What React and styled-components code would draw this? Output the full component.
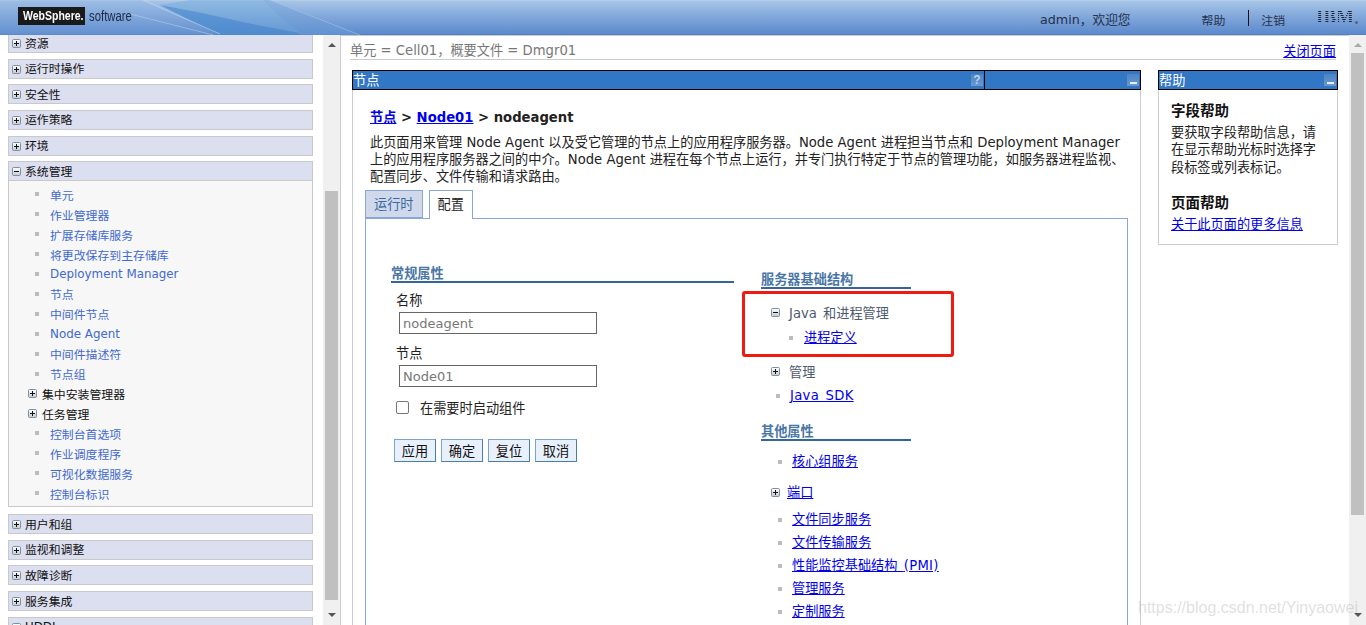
import React from "react";
import styled, { createGlobalStyle } from "styled-components";

const GlobalStyle = createGlobalStyle`
  html, body {
    margin: 0;
    height: 100%;
    overflow: hidden;
    background: #fff;
    font-family: "DejaVu Sans", "Noto Sans CJK SC", sans-serif;
    font-size: 13.2px;
    color: #222;
  }
`;

const Page = styled.div`
  position: relative;
  height: 625px;
  display: flex;
  flex-direction: column;
  overflow: hidden;
`;

const TopBar = styled.header`
  position: relative;
  flex: none;
  height: 35px;
  box-sizing: border-box;
  display: flex;
  align-items: flex-start;
  padding-left: 18px;
  background: linear-gradient(#a6c4e6, #86abdc 40%, #5d8bcd 95%, #4d7ec8);
  border-top: 1px solid #b4cce8;
`;

const Swoosh = styled.svg`
  position: absolute;
  left: 0;
  top: -1px;
`;

const Logo = styled.div`
  position: relative;
  flex: none;
  width: 67px;
  height: 18px;
  margin-top: 6px;
  background: #1a1a1a;
  color: #fff;
  font: bold 12.5px/18px "Liberation Sans", sans-serif;
  overflow: hidden;
`;

const LogoText = styled.span`
  display: inline-block;
  margin-left: 5px;
  transform: scaleX(0.84);
  transform-origin: left center;
  white-space: nowrap;
`;

const LogoSub = styled.div`
  position: relative;
  flex: none;
  width: 44px;
  margin: 7px 0 0 4px;
  color: #1f2a44;
  font: 14px/16px "Liberation Sans", sans-serif;
  transform: scaleX(0.81);
  transform-origin: left center;
`;

const UserArea = styled.div`
  position: relative;
  margin-left: 907px;
  display: flex;
  align-items: center;
  height: 34px;
  color: #26314c;
  font-size: 12.7px;
`;

const HeaderLink = styled.span`
  font-size: 11.88px;
  margin-top: 2px;
  margin-left: ${(p) => p.$left}px;
`;

const HeaderDivider = styled.span`
  width: 1px;
  height: 16px;
  background: #111;
  margin: 0 12px 0 23px;
`;

const IbmMark = styled.div`
  font: bold 19px/16px "Liberation Serif", serif;
  margin: -3px 0 0 31px;
  background: repeating-linear-gradient(#1e2433 0 1px, transparent 1px 2px);
  -webkit-background-clip: text;
  background-clip: text;
  color: transparent;
`;

const IbmDot = styled.span`
  width: 3px;
  height: 3px;
  margin: 9px 0 0 1px;
  border-radius: 50%;
  background: #5a6475;
`;

const Content = styled.div`
  flex: 1;
  min-height: 0;
  display: flex;
`;

const Nav = styled.nav`
  flex: none;
  width: 341px;
  display: flex;
  border-right: 1px solid #ccc;
  box-sizing: border-box;
`;

const NavList = styled.div`
  flex: 1;
  min-width: 0;
  padding: 0 10px 0 8px;
  margin-top: -2px;
`;

const Track = styled.div`
  flex: none;
  width: 17px;
  display: flex;
  flex-direction: column;
  align-items: center;
  background: #f0f0f0;
  height: 590px;
`;

const Arrow = styled.div`
  flex: none;
  width: 0;
  height: 0;
  border-left: 4px solid transparent;
  border-right: 4px solid transparent;
  ${(p) =>
    p.$down
      ? `border-top: 4px solid #555; margin-top: auto; margin-bottom: 8px;`
      : `border-bottom: 4px solid ${p.$dim ? "#aaa" : "#555"}; margin-top: 8px;`}
`;

const Thumb = styled.div`
  flex: none;
  width: 13px;
  background: #c0c0c0;
`;

const NavBar = styled.div`
  height: 20px;
  box-sizing: border-box;
  display: flex;
  align-items: center;
  padding: 1px 0 0 3px;
  gap: 4px;
  background: #dcdff0;
  border: 1px solid #c9c9c9;
  font-size: 11.88px;
  line-height: 18px;
  color: #111;
  margin-bottom: ${(p) => (p.$open ? 0 : 5.67)}px;
`;

const NavPanel = styled.div`
  background: #f7f7f7;
  border: 1px solid #c9c9c9;
  border-top: none;
  padding: 3px 0 3px;
  margin-bottom: 7px;
`;

const NavItem = styled.div`
  height: 19.93px;
  display: flex;
  align-items: center;
  padding-left: 26px;
  font-size: 11.88px;
  color: #4169cf;
`;

const NavBullet = styled.span`
  width: 4px;
  height: 4px;
  background: #bcbcbc;
  margin-right: 11px;
`;

const NavGroupRow = styled.div`
  height: 19.93px;
  display: flex;
  align-items: center;
  gap: 5px;
  padding-left: 19px;
  font-size: 11.88px;
  color: #111;
`;

const Main = styled.main`
  flex: 1;
  min-width: 0;
  border-top: 1px solid #ccc;
  box-sizing: border-box;
`;

const ContextBar = styled.div`
  height: 24px;
  box-sizing: border-box;
  margin: 0 13px 0 9px;
  padding-top: 6px;
  display: flex;
  justify-content: space-between;
  align-items: center;
  border-bottom: 1px solid #ccc;
  color: #777;
  line-height: 17px;
`;

const Link = styled.a`
  color: #0000ee;
  text-decoration: underline;
  font-size: 13.2px;
  line-height: 17px;
  white-space: nowrap;
`;

const CloseLink = styled(Link)`
  margin-top: 2px;
`;

const Latin = styled.span`
  letter-spacing: 0.3px;
`;

const PanelRow = styled.div`
  display: flex;
  align-items: flex-start;
  gap: 17px;
  margin: 10px 0 0 11px;
`;

const Panel = styled.section`
  flex: none;
  width: ${(p) => p.$width}px;
`;

const PanelHead = styled.div`
  height: 20px;
  box-sizing: border-box;
  display: flex;
  align-items: center;
  background: #3177c6;
  border: 1px solid #000;
  color: #fff;
  font-size: 13.2px;
`;

const PanelTitle = styled.span`
  flex: 1;
  line-height: 18px;
  padding-top: 1px;
`;

const HeadButton = styled.span`
  flex: none;
  width: 12px;
  height: 12px;
  margin-right: 1px;
  background: linear-gradient(#4c84c4, #6c98d0);
  color: #bcd2ea;
  font: bold 12px/12px "Liberation Sans", sans-serif;
  display: flex;
  align-items: flex-end;
  justify-content: center;
`;

const MinusMark = styled.i`
  display: block;
  width: 7px;
  height: 2px;
  background: #e4edf8;
  margin-bottom: 2px;
`;

const HeadDivider = styled.span`
  flex: none;
  width: 1px;
  align-self: stretch;
  background: #000;
`;

const HeadRight = styled.div`
  flex: none;
  width: 155px;
  display: flex;
  justify-content: flex-end;
`;

const PanelBody = styled.div`
  border: 1px solid #ccc;
  border-width: ${(p) => (p.$closed ? "0 1px 1px" : "0 1px")};
  padding: ${(p) => (p.$closed ? "12px" : "19px 0 0 17px")};
  ${(p) => p.$closed && "height: 155px;"}
  box-sizing: border-box;
`;

const Crumbs = styled.div`
  font-weight: bold;
  line-height: 17px;
`;

const CrumbLink = styled.a`
  color: #0000ee;
  text-decoration: underline;
`;

const Description = styled.p`
  margin: 8px 0 0;
  line-height: 17px;
  white-space: nowrap;
`;

const Tabs = styled.div`
  display: flex;
  gap: 6px;
  margin: 5px 0 0 -5px;
  height: 28px;
`;

const Tab = styled.div`
  box-sizing: border-box;
  height: ${(p) => (p.$active ? 29 : 28)}px;
  padding: 0 8px;
  line-height: 27px;
  border: 1px solid #8aa6d6;
  border-bottom: ${(p) => (p.$active ? "none" : "1px solid #8aa6d6")};
  background: ${(p) => (p.$active ? "#fff" : "#d0d9ec")};
  color: ${(p) => (p.$active ? "#222" : "#3d6a9e")};
  position: relative;
`;

const TabBox = styled.div`
  margin-left: -5px;
  width: 763px;
  box-sizing: border-box;
  min-height: 500px;
  border: 1px solid #8aa6d6;
  padding-left: 25px;
  display: flex;
  gap: 27px;
`;

const LeftCol = styled.div`
  flex: none;
  width: 343px;
  padding-top: 46px;
`;

const RightCol = styled.div`
  position: relative;
  flex: none;
  width: 211px;
  padding-top: 52px;
`;

const SectionHead = styled.h3`
  margin: ${(p) => p.$mt || 0}px 0 0;
  ${(p) => p.$width && `width: ${p.$width}px;`}
  box-sizing: content-box;
  height: 15px;
  padding-top: 1px;
  font-size: 13.2px;
  line-height: 16px;
  font-weight: 700;
  color: #4a76a6;
  border-bottom: 2px solid #336699;
`;

const FieldLabel = styled.label`
  display: block;
  margin: ${(p) => p.$mt}px 0 3px 5px;
  line-height: 17px;
`;

const TextInput = styled.input`
  display: block;
  margin-left: 8px;
  width: 198px;
  height: 22px;
  box-sizing: border-box;
  border: 1px solid #666;
  padding: 0 3px;
  font: 13px "DejaVu Sans", sans-serif;
  color: #777;
  background: #fff;
`;

const CheckRow = styled.div`
  display: flex;
  align-items: center;
  gap: 11px;
  margin: 12px 0 0 5px;
  height: 17px;
`;

const CheckBox = styled.span`
  flex: none;
  width: 13px;
  height: 13px;
  box-sizing: border-box;
  border: 1px solid #767676;
  border-radius: 2px;
  background: #fff;
`;

const ButtonRow = styled.div`
  display: flex;
  gap: 5px;
  margin: 23px 0 0 3px;
`;

const Button = styled.button`
  width: 42px;
  height: 23px;
  padding: 0;
  box-sizing: border-box;
  border: 1px solid #7ba3cf;
  border-right-color: #4c7cab;
  border-bottom-color: #4c7cab;
  background: #e8f0fc;
  color: #111;
  font: 13.2px "DejaVu Sans", "Noto Sans CJK SC", sans-serif;
`;

const TreeRow = styled.div`
  display: flex;
  align-items: center;
  height: 17px;
  margin-top: ${(p) => p.$mt}px;
  padding-left: ${(p) => p.$indent}px;
  gap: ${(p) => p.$gap}px;
  color: #4e5a6e;
  word-spacing: 2px;
`;

const TreeLabel = styled.span`
  white-space: nowrap;
`;

const Bullet = styled.span`
  flex: none;
  width: 4px;
  height: 4px;
  background: #bcbcbc;
`;

const Highlight = styled.div`
  position: absolute;
  left: -19px;
  top: 72px;
  width: 212px;
  height: 66px;
  box-sizing: border-box;
  border: 3px solid #f01a10;
  border-radius: 3px;
`;

const HelpHead = styled.h4`
  margin: ${(p) => p.$mt}px 0 0;
  font-size: 14.52px;
  line-height: 18px;
  font-weight: 700;
  color: #111;
`;

const HelpText = styled.p`
  margin: 4px 0 0;
  line-height: 17.3px;
  white-space: nowrap;
`;

const Watermark = styled.div`
  position: absolute;
  right: 8px;
  bottom: 8px;
  font: 16px "Liberation Sans", sans-serif;
  color: rgba(185, 185, 185, 0.45);
`;

const Toggle = ({ open }) => (
  <svg width="9" height="9" viewBox="0 0 9 9" style={{ flex: "none" }}>
    <defs>
      <linearGradient id="tg" x1="0" y1="0" x2="0" y2="1">
        <stop offset="0" stopColor="#fff" />
        <stop offset="1" stopColor="#c4c8cc" />
      </linearGradient>
    </defs>
    <rect x="0.5" y="0.5" width="8" height="8" rx="1" fill="url(#tg)" stroke="#7d8fa3" />
    <rect x="2" y="4" width="5" height="1" fill="#111" />
    {!open && <rect x="4" y="2" width="1" height="5" fill="#111" />}
  </svg>
);

const ScrollBar = ({ top, height, dim }) => (
  <Track>
    <Arrow $dim={dim} />
    <Thumb style={{ marginTop: top, height }} />
    <Arrow $down />
  </Track>
);

const closedBefore = ["资源", "运行时操作", "安全性", "运作策略", "环境"];
const closedAfter = ["用户和组", "监视和调整", "故障诊断", "服务集成", "UDDI"];
const sysItems = [
  "单元",
  "作业管理器",
  "扩展存储库服务",
  "将更改保存到主存储库",
  "Deployment Manager",
  "节点",
  "中间件节点",
  "Node Agent",
  "中间件描述符",
  "节点组",
];
const sysTail = ["控制台首选项", "作业调度程序", "可视化数据服务", "控制台标识"];

export default function App() {
  return (
    <Page>
      <GlobalStyle />
      <TopBar>
        <Swoosh width="1366" height="35" viewBox="0 0 1366 35">
          <path d="M0 0 L143 0 L220 35 L0 35 Z" fill="#7ea6da" opacity="0.25" />
          <path d="M190 0 L263 0 L300 33 L247 23 L197 12 L160 5 Z" fill="#72aadb" opacity="0.45" />
          <path d="M160 5 L197 12 L247 23 L297 33 L297 35 L220 35 Z" fill="#4a8ccf" opacity="0.7" />
          <path d="M263 0 L270 0 L360 35 L300 35 Z" fill="#6d9dd6" opacity="0.45" />
          <path d="M143 0 L220 34" stroke="#d4e3f3" strokeWidth="1" fill="none" opacity="0.55" />
          <path d="M130 14 Q170 24 213 35" stroke="#b8d0ec" strokeWidth="1" fill="none" opacity="0.55" />
          <path d="M270 0 L360 35" stroke="#b4cbe6" strokeWidth="1" fill="none" opacity="0.5" />
        </Swoosh>
        <Logo>
          <LogoText>WebSphere.</LogoText>
        </Logo>
        <LogoSub>software</LogoSub>
        <UserArea>
          <span>admin，欢迎您</span>
          <HeaderLink $left={71}>帮助</HeaderLink>
          <HeaderDivider />
          <HeaderLink $left={0}>注销</HeaderLink>
          <IbmMark>IBM</IbmMark>
          <IbmDot />
        </UserArea>
      </TopBar>
      <Content>
        <Nav>
          <NavList>
            {closedBefore.map((t) => (
              <NavBar key={t}>
                <Toggle />
                {t}
              </NavBar>
            ))}
            <NavBar $open>
              <Toggle open />
              系统管理
            </NavBar>
            <NavPanel>
              {sysItems.map((t) => (
                <NavItem key={t}>
                  <NavBullet />
                  {t}
                </NavItem>
              ))}
              <NavGroupRow>
                <Toggle />
                集中安装管理器
              </NavGroupRow>
              <NavGroupRow>
                <Toggle />
                任务管理
              </NavGroupRow>
              {sysTail.map((t) => (
                <NavItem key={t}>
                  <NavBullet />
                  {t}
                </NavItem>
              ))}
            </NavPanel>
            {closedAfter.map((t) => (
              <NavBar key={t}>
                <Toggle />
                {t}
              </NavBar>
            ))}
          </NavList>
          <ScrollBar top={144} height={409} />
        </Nav>
        <Main>
          <ContextBar>
            <span>单元 = Cell01，概要文件 = Dmgr01</span>
            <CloseLink>关闭页面</CloseLink>
          </ContextBar>
          <PanelRow>
            <Panel $width={789}>
              <PanelHead>
                <PanelTitle>节点</PanelTitle>
                <HeadButton>?</HeadButton>
                <HeadDivider />
                <HeadRight>
                  <HeadButton>
                    <MinusMark />
                  </HeadButton>
                </HeadRight>
              </PanelHead>
              <PanelBody>
                <Crumbs>
                  <CrumbLink>节点</CrumbLink> &gt; <CrumbLink>Node01</CrumbLink> &gt; nodeagent
                </Crumbs>
                <Description>
                  此页面用来管理 Node Agent 以及受它管理的节点上的应用程序服务器。Node Agent 进程担当节点和 Deployment Manager
                  <br />
                  上的应用程序服务器之间的中介。Node Agent 进程在每个节点上运行，并专门执行特定于节点的管理功能，如服务器进程监视、
                  <br />
                  配置同步、文件传输和请求路由。
                </Description>
                <Tabs>
                  <Tab>运行时</Tab>
                  <Tab $active>配置</Tab>
                </Tabs>
                <TabBox>
                  <LeftCol>
                    <SectionHead>常规属性</SectionHead>
                    <FieldLabel $mt={9}>名称</FieldLabel>
                    <TextInput readOnly value="nodeagent" />
                    <FieldLabel $mt={11}>节点</FieldLabel>
                    <TextInput readOnly value="Node01" />
                    <CheckRow>
                      <CheckBox />
                      在需要时启动组件
                    </CheckRow>
                    <ButtonRow>
                      <Button>应用</Button>
                      <Button>确定</Button>
                      <Button>复位</Button>
                      <Button>取消</Button>
                    </ButtonRow>
                  </LeftCol>
                  <RightCol>
                    <SectionHead $width={150}>服务器基础结构</SectionHead>
                    <TreeRow $mt={15} $indent={10} $gap={9}>
                      <Toggle open />
                      <TreeLabel>Java 和进程管理</TreeLabel>
                    </TreeRow>
                    <TreeRow $mt={8} $indent={28} $gap={11}>
                      <Bullet />
                      <Link>进程定义</Link>
                    </TreeRow>
                    <TreeRow $mt={17} $indent={10} $gap={9}>
                      <Toggle />
                      <TreeLabel>管理</TreeLabel>
                    </TreeRow>
                    <TreeRow $mt={7} $indent={15} $gap={10}>
                      <Bullet />
                      <Link>
                        <Latin>Java SDK</Latin>
                      </Link>
                    </TreeRow>
                    <SectionHead $width={150} $mt={19}>
                      其他属性
                    </SectionHead>
                    <TreeRow $mt={12} $indent={17} $gap={10}>
                      <Bullet />
                      <Link>核心组服务</Link>
                    </TreeRow>
                    <TreeRow $mt={14} $indent={10} $gap={7}>
                      <Toggle />
                      <Link>端口</Link>
                    </TreeRow>
                    <TreeRow $mt={10} $indent={17} $gap={10}>
                      <Bullet />
                      <Link>文件同步服务</Link>
                    </TreeRow>
                    <TreeRow $mt={6} $indent={17} $gap={10}>
                      <Bullet />
                      <Link>文件传输服务</Link>
                    </TreeRow>
                    <TreeRow $mt={6} $indent={17} $gap={10}>
                      <Bullet />
                      <Link>
                        性能监控基础结构 <Latin>(PMI)</Latin>
                      </Link>
                    </TreeRow>
                    <TreeRow $mt={6} $indent={17} $gap={10}>
                      <Bullet />
                      <Link>管理服务</Link>
                    </TreeRow>
                    <TreeRow $mt={6} $indent={17} $gap={10}>
                      <Bullet />
                      <Link>定制服务</Link>
                    </TreeRow>
                    <Highlight />
                  </RightCol>
                </TabBox>
              </PanelBody>
            </Panel>
            <Panel $width={180}>
              <PanelHead>
                <PanelTitle>帮助</PanelTitle>
                <HeadButton>
                  <MinusMark />
                </HeadButton>
              </PanelHead>
              <PanelBody $closed>
                <HelpHead $mt={0}>字段帮助</HelpHead>
                <HelpText>
                  要获取字段帮助信息，请
                  <br />
                  在显示帮助光标时选择字
                  <br />
                  段标签或列表标记。
                </HelpText>
                <HelpHead $mt={18}>页面帮助</HelpHead>
                <HelpText>
                  <Link>关于此页面的更多信息</Link>
                </HelpText>
              </PanelBody>
            </Panel>
          </PanelRow>
        </Main>
        <ScrollBar top={6} height={462} dim />
      </Content>
      <Watermark>https://blog.csdn.net/Yinyaowei</Watermark>
    </Page>
  );
}
